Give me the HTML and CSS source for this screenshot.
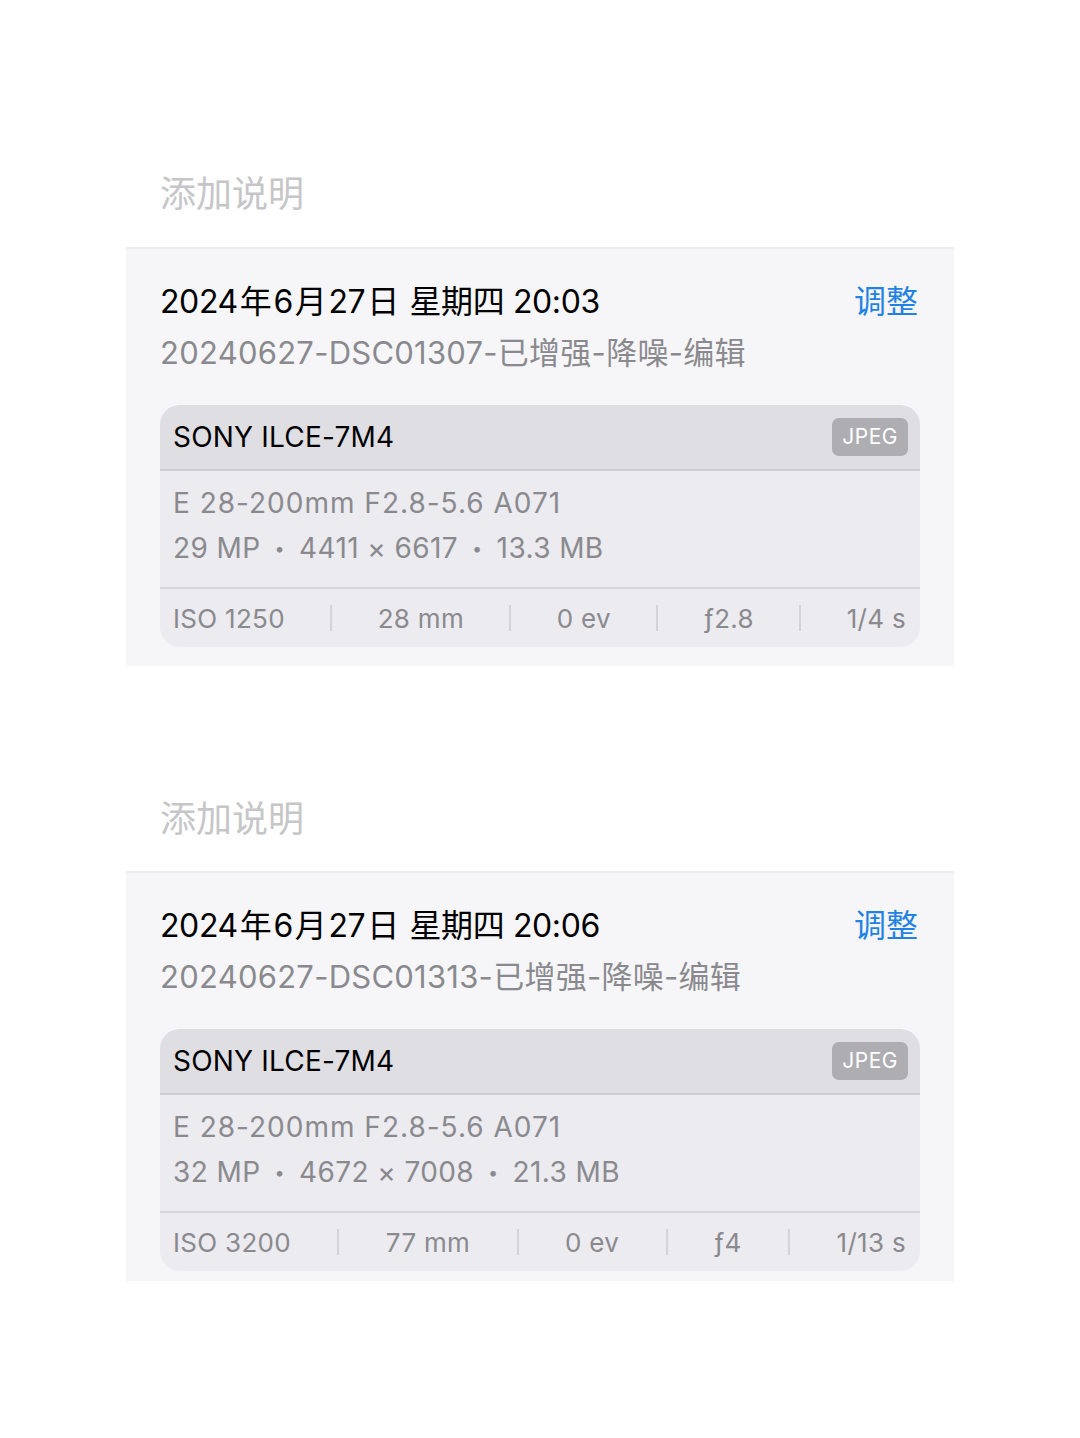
FILE: index.html
```html
<!DOCTYPE html>
<html lang="zh-CN">
<head>
    <meta charset="UTF-8">
    <meta name="viewport" content="width=device-width, initial-scale=1.0">
    <title>照片信息</title>
    <link rel="stylesheet" href="styles.css">
</head>
<body>
    <div class="page">
        <div class="caption">添加说明</div>
        <div class="panel">
            <div class="title-row">
                <div class="date">2024<span class="cj">年</span>6<span class="cj">月</span>27<span class="cj">日</span> 星期四 20:03</div>
                <div class="adjust">调整</div>
            </div>
            <div class="filename">20240627-DSC01307-已增强-降噪-编辑</div>
            <div class="card">
                <div class="card-head">
                    <span class="camera">SONY ILCE-7M4</span>
                    <span class="badge">JPEG</span>
                </div>
                <div class="card-body">
                    <div class="line lens">E 28-200mm F2.8-5.6 A071</div>
                    <div class="line">29 MP<span class="dot">•</span>4411 × 6617<span class="dot">•</span>13.3 MB</div>
                </div>
                <div class="stats">
                    <span>ISO 1250</span><i class="sep"></i>
                    <span>28 mm</span><i class="sep"></i>
                    <span>0 ev</span><i class="sep"></i>
                    <span>ƒ2.8</span><i class="sep"></i>
                    <span>1/4 s</span>
                </div>
            </div>
        </div>

        <div class="caption second">添加说明</div>
        <div class="panel last">
            <div class="title-row">
                <div class="date">2024<span class="cj">年</span>6<span class="cj">月</span>27<span class="cj">日</span> 星期四 20:06</div>
                <div class="adjust">调整</div>
            </div>
            <div class="filename">20240627-DSC01313-已增强-降噪-编辑</div>
            <div class="card">
                <div class="card-head">
                    <span class="camera">SONY ILCE-7M4</span>
                    <span class="badge">JPEG</span>
                </div>
                <div class="card-body">
                    <div class="line lens">E 28-200mm F2.8-5.6 A071</div>
                    <div class="line">32 MP<span class="dot">•</span>4672 × 7008<span class="dot">•</span>21.3 MB</div>
                </div>
                <div class="stats">
                    <span>ISO 3200</span><i class="sep"></i>
                    <span>77 mm</span><i class="sep"></i>
                    <span>0 ev</span><i class="sep"></i>
                    <span>ƒ4</span><i class="sep"></i>
                    <span>1/13 s</span>
                </div>
            </div>
        </div>
    </div>
</body>
</html>
```

FILE: styles.css
```css
body, html {
    margin: 0;
    padding: 0;
    background-color: #ffffff;
    font-family: Inter, "Noto Sans CJK SC", sans-serif;
    color: #000;
}

.page {
    padding-top: 169px;
    padding-left: 126px;
    width: 828px;
}

.caption {
    padding-left: 34px;
    font-size: 36px;
    line-height: 50px;
    color: #c6c6c9;
    margin-bottom: 28px;
}

.caption.second {
    margin-top: 128px;
    margin-bottom: 27px;
}

.panel {
    background-color: #f6f6f9;
    border-top: 2px solid #ececef;
    padding: 32px 34px 19px 34px;
}

.panel.last {
    padding-bottom: 10px;
}

.title-row {
    display: flex;
    justify-content: space-between;
    align-items: center;
    padding-right: 2px;
}

.date {
    font-size: 32px;
    line-height: 42px;
    letter-spacing: -0.4px;
}

.date .cj {
    margin: 0 2px;
}

.adjust {
    font-size: 32px;
    line-height: 42px;
    color: #1f82e4;
}

.filename {
    font-size: 31px;
    line-height: 42px;
    margin-top: 9px;
    color: #8a8a8e;
    letter-spacing: 0.25px;
}

.card {
    margin-top: 31px;
    border-radius: 20px;
    overflow: hidden;
    background-color: #ebebf0;
}

.card-head {
    display: flex;
    justify-content: space-between;
    align-items: center;
    height: 64px;
    padding: 0 12px 0 13px;
    background-color: #dedee3;
    border-bottom: 2px solid #cdcdd2;
}

.camera {
    font-size: 28px;
    letter-spacing: 0.2px;
}

.badge {
    background-color: #adadb2;
    color: #ffffff;
    font-size: 21px;
    line-height: 38px;
    padding: 0 10px;
    border-radius: 7px;
    letter-spacing: 0.5px;
}

.card-body {
    padding: 10px 13px 16px 13px;
    border-bottom: 2px solid #d6d6db;
}

.line {
    font-size: 28px;
    line-height: 45px;
    color: #8a8a8e;
    letter-spacing: 0.4px;
}

.line.lens {
    letter-spacing: 1px;
}

.dot {
    font-size: 18px;
    margin: 0 14px;
    vertical-align: 3px;
}

.stats {
    display: flex;
    justify-content: space-between;
    align-items: center;
    height: 58px;
    padding: 0 14px 0 13px;
    font-size: 26px;
    color: #8a8a8e;
    letter-spacing: 0.3px;
}

.sep {
    width: 2px;
    height: 26px;
    background-color: #d3d3d8;
}
```
